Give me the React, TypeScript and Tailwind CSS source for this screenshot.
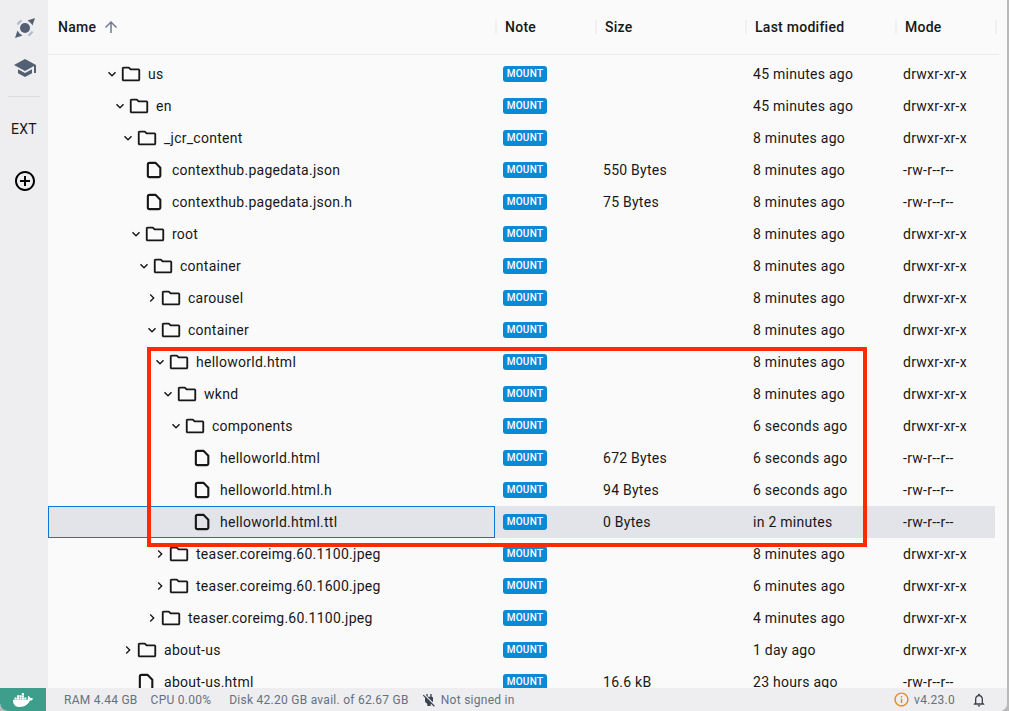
import { FaDocker } from "react-icons/fa";

type Row = {
  name: string;
  depth: number;
  kind: "open" | "closed" | "file";
  size?: string;
  modified: string;
  selected?: boolean;
};

const rows: Row[] = [
  { name: "us", depth: 0, kind: "open", modified: "45 minutes ago" },
  { name: "en", depth: 1, kind: "open", modified: "45 minutes ago" },
  { name: "_jcr_content", depth: 2, kind: "open", modified: "8 minutes ago" },
  { name: "contexthub.pagedata.json", depth: 3, kind: "file", size: "550 Bytes", modified: "8 minutes ago" },
  { name: "contexthub.pagedata.json.h", depth: 3, kind: "file", size: "75 Bytes", modified: "8 minutes ago" },
  { name: "root", depth: 3, kind: "open", modified: "8 minutes ago" },
  { name: "container", depth: 4, kind: "open", modified: "8 minutes ago" },
  { name: "carousel", depth: 5, kind: "closed", modified: "8 minutes ago" },
  { name: "container", depth: 5, kind: "open", modified: "8 minutes ago" },
  { name: "helloworld.html", depth: 6, kind: "open", modified: "8 minutes ago" },
  { name: "wknd", depth: 7, kind: "open", modified: "8 minutes ago" },
  { name: "components", depth: 8, kind: "open", modified: "6 seconds ago" },
  { name: "helloworld.html", depth: 9, kind: "file", size: "672 Bytes", modified: "6 seconds ago" },
  { name: "helloworld.html.h", depth: 9, kind: "file", size: "94 Bytes", modified: "6 seconds ago" },
  { name: "helloworld.html.ttl", depth: 9, kind: "file", size: "0 Bytes", modified: "in 2 minutes", selected: true },
  { name: "teaser.coreimg.60.1100.jpeg", depth: 6, kind: "closed", modified: "8 minutes ago" },
  { name: "teaser.coreimg.60.1600.jpeg", depth: 6, kind: "closed", modified: "6 minutes ago" },
  { name: "teaser.coreimg.60.1100.jpeg", depth: 5, kind: "closed", modified: "4 minutes ago" },
  { name: "about-us", depth: 2, kind: "closed", modified: "1 day ago" },
  { name: "about-us.html", depth: 2, kind: "file", size: "16.6 kB", modified: "23 hours ago" },
];

function Icon({ d, className }: { d: string; className: string }) {
  return (
    <svg viewBox="0 0 24 24" fill="currentColor" className={className}>
      <path d={d} />
    </svg>
  );
}

function Logo() {
  return (
    <svg viewBox="0 0 20 20" className="h-5 w-5">
      <circle cx="10" cy="10" r="5" fill="#535f73" />
      <path d="M12.5 2.5 20 0l-2.5 7.5C16.5 5.5 14.5 3.5 12.5 2.5z" fill="#535f73" />
      <path d="M2.5 12.5 0 20l7.5-2.5C5.5 16.5 3.5 14.5 2.5 12.5z" fill="#535f73" />
      <path d="M2.5 6.5C3.5 4.8 4.8 3.5 6.5 2.5M17.5 13.5c-1 1.7-2.300 3-4 4" fill="none" stroke="#b4bac4" strokeWidth="2.200" />
    </svg>
  );
}

function TreeIcon({ kind }: { kind: Row["kind"] }) {
  if (kind === "file") {
    return (
      <svg viewBox="0 0 24 24" fill="none" stroke="#171717" strokeWidth="2.300" strokeLinejoin="round" className="h-[22px] w-[22px] shrink-0">
        <path d="M6 4.200h6.500l5.300 5.300V18a1.800 1.800 0 0 1-1.800 1.800H6A1.800 1.800 0 0 1 4.200 18V6A1.800 1.800 0 0 1 6 4.200z" />
      </svg>
    );
  }
  return (
    <Icon
      d="M9.170 6l2 2H20v10H4V6h5.170M10 4H4c-1.100 0-1.990.9-1.990 2L2 18c0 1.100.9 2 2 2h16c1.100 0 2-.9 2-2V8c0-1.100-.9-2-2-2h-8l-2-2z"
      className="h-[22px] w-[22px] shrink-0 text-[#171717]"
    />
  );
}

function TreeRow({ row }: { row: Row }) {
  return (
    <div className={`grid h-8 w-[947px] grid-cols-[447px_100px_150px_150px_100px] items-center ${row.selected ? "bg-[#e3e4ea]" : ""}`}>
      <div
        className={`flex h-8 items-center ${row.selected ? "border border-[#0a78d6]" : ""}`}
        style={{ paddingLeft: 56 + row.depth * 8 - (row.selected ? 1 : 0) }}
      >
        <span className="flex w-4 shrink-0 justify-center">
          {row.kind === "open" && <Icon d="M16.590 8.590 12 13.170 7.410 8.590 6 10l6 6 6-6z" className="h-4 w-4 text-[#171717]" />}
          {row.kind === "closed" && <Icon d="M10 6 8.590 7.410 13.170 12l-4.580 4.590L10 18l6-6z" className="h-4 w-4 text-[#171717]" />}
        </span>
        <TreeIcon kind={row.kind} />
        <span className="ml-1.5 whitespace-nowrap">{row.name}</span>
      </div>
      <div className="pl-2">
        <span className="flex h-4 w-11 items-center justify-center rounded-[3px] bg-[#0a8ad4] text-[10px] font-medium tracking-[0.3px] text-white">
          MOUNT
        </span>
      </div>
      <div className="pl-2">{row.size}</div>
      <div className="pl-2">{row.modified}</div>
      <div className="pl-2">{row.kind === "file" ? "-rw-r--r--" : "drwxr-xr-x"}</div>
    </div>
  );
}

function HeaderCell({ label }: { label: string }) {
  return (
    <div className="flex items-center">
      <span className="h-3.5 w-0.5 bg-[#f0f0f2]" />
      <span className="pl-2 font-medium">{label}</span>
    </div>
  );
}

export default function App() {
  return (
    <div className="flex h-[711px] overflow-hidden bg-[#b9b9b9] font-['Roboto',sans-serif] text-sm tracking-[0.26px] text-[#171717]">
      <div className="flex w-[1007px] flex-col overflow-hidden rounded-b-lg bg-[#fafafa]">
        <div className="flex min-h-0 flex-1">
          <aside className="flex w-12 shrink-0 flex-col items-center bg-[#eeeef1] pl-0.5 pt-[18px]">
            <Logo />
            <Icon
              d="M5 13.180v4L12 21l7-3.820v-4L12 17l-7-3.820zM12 3 1 9l11 6 9-4.910V17h2V9L12 3z"
              className="mt-[18px] h-6 w-6 text-[#535f73]"
            />
            <div className="-ml-0.5 mt-4 h-px w-8 bg-[#dcdde2]" />
            <span className="-ml-0.5 mt-[24px] leading-4">EXT</span>
            <Icon
              d="M13 7h-2v4H7v2h4v4h2v-4h4v-2h-4V7zm-1-5C6.490 2 2 6.490 2 12s4.490 10 10 10 10-4.490 10-10S17.510 2 12 2zm0 18c-4.410 0-8-3.590-8-8s3.590-8 8-8 8 3.590 8 8-3.590 8-8 8z"
              className="mt-[32px] h-6 w-6 text-black"
            />
          </aside>

          <main className="relative min-w-0 flex-1 overflow-hidden">
            <div className="grid h-[55px] w-[951px] grid-cols-[447px_100px_150px_150px_100px_2px] border-b border-[#ececee]">
              <div className="flex items-center pl-2.5 font-medium">
                Name
                <Icon d="M4 12l1.410 1.410L11 7.830V20h2V7.830l5.580 5.590L20 12l-8-8-8 8z" className="ml-1.5 h-[18px] w-[18px] text-[#6b7a94]" />
              </div>
              <HeaderCell label="Note" />
              <HeaderCell label="Size" />
              <HeaderCell label="Last modified" />
              <HeaderCell label="Mode" />
              <div className="flex items-center">
                <span className="h-3.5 w-0.5 bg-[#f0f0f2]" />
              </div>
            </div>
            <div className="pt-[3px]">
              {rows.map((row, i) => (
                <TreeRow key={i} row={row} />
              ))}
            </div>
            {/* annotation drawn on top of the screenshot */}
            <div className="absolute left-[99px] top-[347px] h-[200px] w-[720px] border-4 border-[#ff2a00]" />
          </main>
        </div>

        <footer className="flex h-[23px] shrink-0 items-center bg-[#eeeef1] text-xs text-[#66707f]">
          <div className="flex h-full w-[46px] items-center justify-center bg-[#3d9f8b] text-white">
            <FaDocker className="h-5 w-5" />
          </div>
          <span className="ml-[18px]">RAM 4.44 GB</span>
          <span className="ml-[13px]">CPU 0.00%</span>
          <span className="ml-[18px]">Disk 42.20 GB avail. of 62.67 GB</span>
          <Icon
            d="M18 14.490V9c0-1-1.010-2.010-2-2V3h-2v4h-4V3H8v2.480l9.510 9.500.49-.49zm-1.760 1.770L7.200 7.200l-.01.01L3.980 4 2.710 5.250l3.360 3.360C6.040 8.740 6 8.870 6 9v5.480L9.500 18v3h5v-3l.48-.48L19.450 22l1.260-1.280-4.470-4.460z"
            className="ml-3 h-4 w-4 text-[#3a4350]"
          />
          <span className="ml-1">Not signed in</span>
          <Icon
            d="M11 7h2v2h-2zm0 4h2v6h-2zm1-9C6.480 2 2 6.480 2 12s4.480 10 10 10 10-4.480 10-10S17.520 2 12 2zm0 18c-4.410 0-8-3.590-8-8s3.590-8 8-8 8 3.590 8 8-3.590 8-8 8z"
            className="ml-auto h-[17px] w-[17px] text-[#e8891c]"
          />
          <span className="ml-1">v4.23.0</span>
          <Icon
            d="M12 22c1.100 0 2-.9 2-2h-4c0 1.100.9 2 2 2zm6-6v-5c0-3.070-1.630-5.640-4.500-6.320V4c0-.83-.67-1.500-1.500-1.500s-1.500.67-1.500 1.500v.68C7.640 5.360 6 7.920 6 11v5l-2 2v1h16v-1l-2-2zm-2 1H8v-6c0-2.480 1.510-4.500 4-4.500s4 2.020 4 4.500v6z"
            className="ml-4 mr-5 h-4 w-4 text-[#3a4350]"
          />
        </footer>
      </div>
    </div>
  );
}
